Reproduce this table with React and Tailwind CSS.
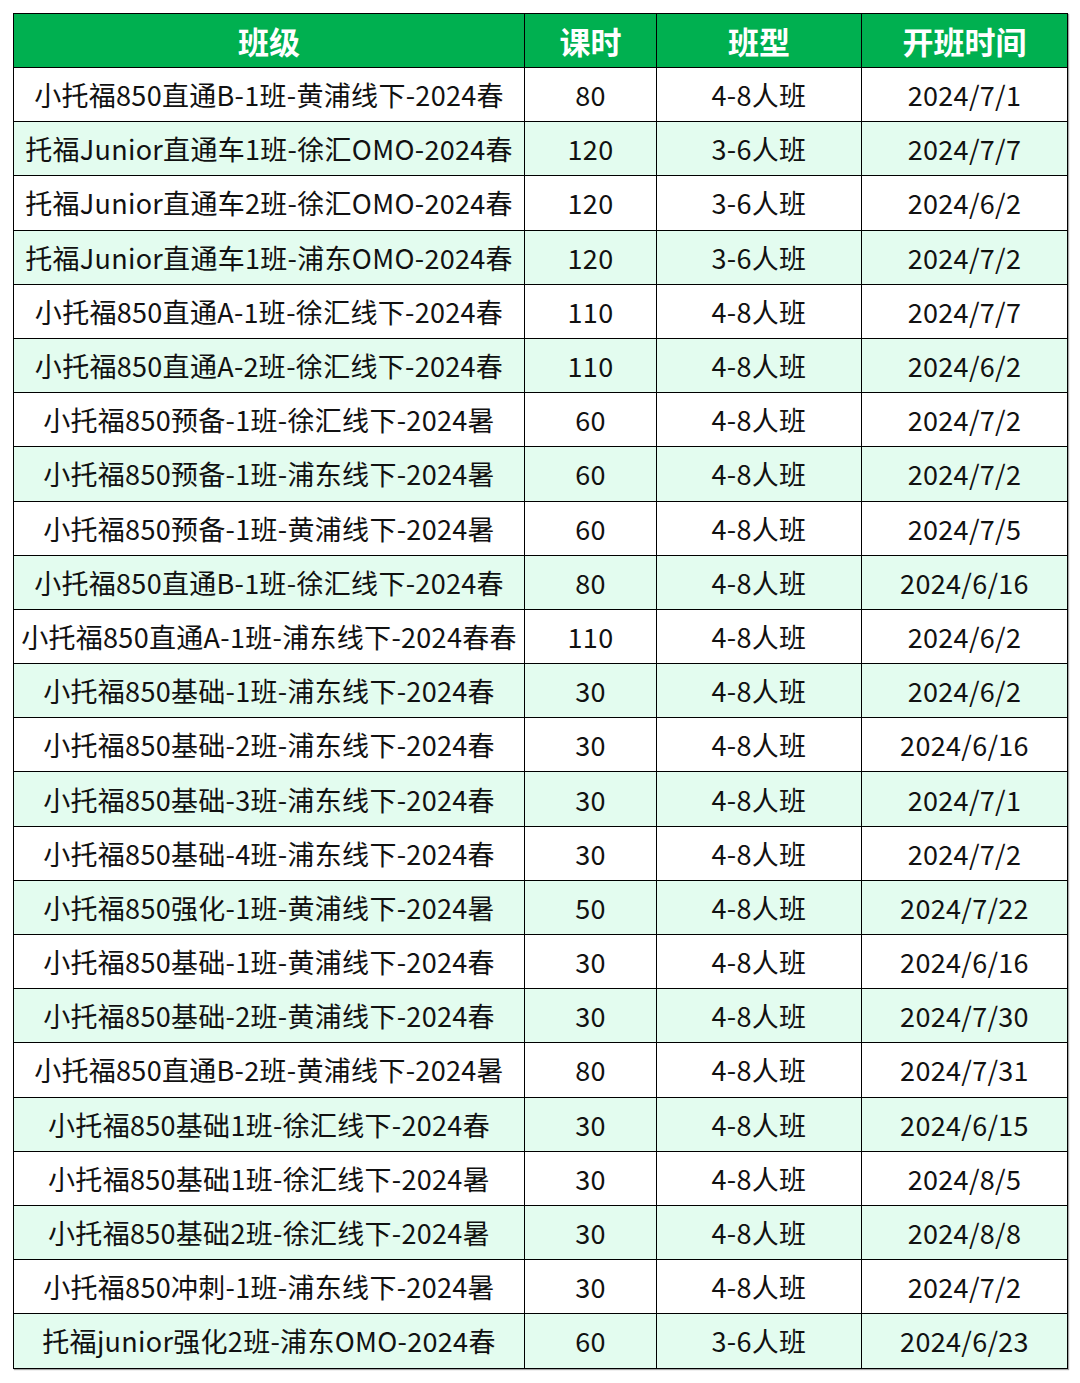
import React from 'react';

const rows = [
  ['小托福850直通B-1班-黄浦线下-2024春', '80', '4-8人班', '2024/7/1'],
  ['托福Junior直通车1班-徐汇OMO-2024春', '120', '3-6人班', '2024/7/7'],
  ['托福Junior直通车2班-徐汇OMO-2024春', '120', '3-6人班', '2024/6/2'],
  ['托福Junior直通车1班-浦东OMO-2024春', '120', '3-6人班', '2024/7/2'],
  ['小托福850直通A-1班-徐汇线下-2024春', '110', '4-8人班', '2024/7/7'],
  ['小托福850直通A-2班-徐汇线下-2024春', '110', '4-8人班', '2024/6/2'],
  ['小托福850预备-1班-徐汇线下-2024暑', '60', '4-8人班', '2024/7/2'],
  ['小托福850预备-1班-浦东线下-2024暑', '60', '4-8人班', '2024/7/2'],
  ['小托福850预备-1班-黄浦线下-2024暑', '60', '4-8人班', '2024/7/5'],
  ['小托福850直通B-1班-徐汇线下-2024春', '80', '4-8人班', '2024/6/16'],
  ['小托福850直通A-1班-浦东线下-2024春春', '110', '4-8人班', '2024/6/2'],
  ['小托福850基础-1班-浦东线下-2024春', '30', '4-8人班', '2024/6/2'],
  ['小托福850基础-2班-浦东线下-2024春', '30', '4-8人班', '2024/6/16'],
  ['小托福850基础-3班-浦东线下-2024春', '30', '4-8人班', '2024/7/1'],
  ['小托福850基础-4班-浦东线下-2024春', '30', '4-8人班', '2024/7/2'],
  ['小托福850强化-1班-黄浦线下-2024暑', '50', '4-8人班', '2024/7/22'],
  ['小托福850基础-1班-黄浦线下-2024春', '30', '4-8人班', '2024/6/16'],
  ['小托福850基础-2班-黄浦线下-2024春', '30', '4-8人班', '2024/7/30'],
  ['小托福850直通B-2班-黄浦线下-2024暑', '80', '4-8人班', '2024/7/31'],
  ['小托福850基础1班-徐汇线下-2024春', '30', '4-8人班', '2024/6/15'],
  ['小托福850基础1班-徐汇线下-2024暑', '30', '4-8人班', '2024/8/5'],
  ['小托福850基础2班-徐汇线下-2024暑', '30', '4-8人班', '2024/8/8'],
  ['小托福850冲刺-1班-浦东线下-2024暑', '30', '4-8人班', '2024/7/2'],
  ['托福junior强化2班-浦东OMO-2024春', '60', '3-6人班', '2024/6/23'],
];

const headers = ['班级', '课时', '班型', '开班时间'];

export default function App() {
  return (
    <div className="w-[1080px] h-[1383px] bg-white pt-[13px] pl-[13px] font-['Noto_Sans_CJK_SC','Noto_Sans',sans-serif]">
      <table className="border-collapse table-fixed w-[1054px] border-[1.5px] border-black shadow-[1px_1px_1px_rgba(0,0,0,0.35)]">
        <colgroup>
          <col className="w-[511px]" />
          <col className="w-[132px]" />
          <col className="w-[205px]" />
          <col className="w-[206px]" />
        </colgroup>
        <thead>
          <tr className="h-[54px] bg-[#00b050]">
            {headers.map((h) => (
              <th
                key={h}
                className="border-[1.5px] border-black p-0 text-center text-[31px] font-bold text-white leading-none"
              >
                {h}
              </th>
            ))}
          </tr>
        </thead>
        <tbody>
          {rows.map((r, i) => (
            <tr key={i} className={i % 2 === 1 ? 'h-[54.2px] bg-[#e3fcef]' : 'h-[54.2px] bg-white'}>
              {r.map((c, j) => (
                <td
                  key={j}
                  className="border-[1.5px] border-black p-0 text-center text-[27px] text-[#111] leading-none whitespace-nowrap tracking-[0.3px]"
                >
                  {c}
                </td>
              ))}
            </tr>
          ))}
        </tbody>
      </table>
    </div>
  );
}
